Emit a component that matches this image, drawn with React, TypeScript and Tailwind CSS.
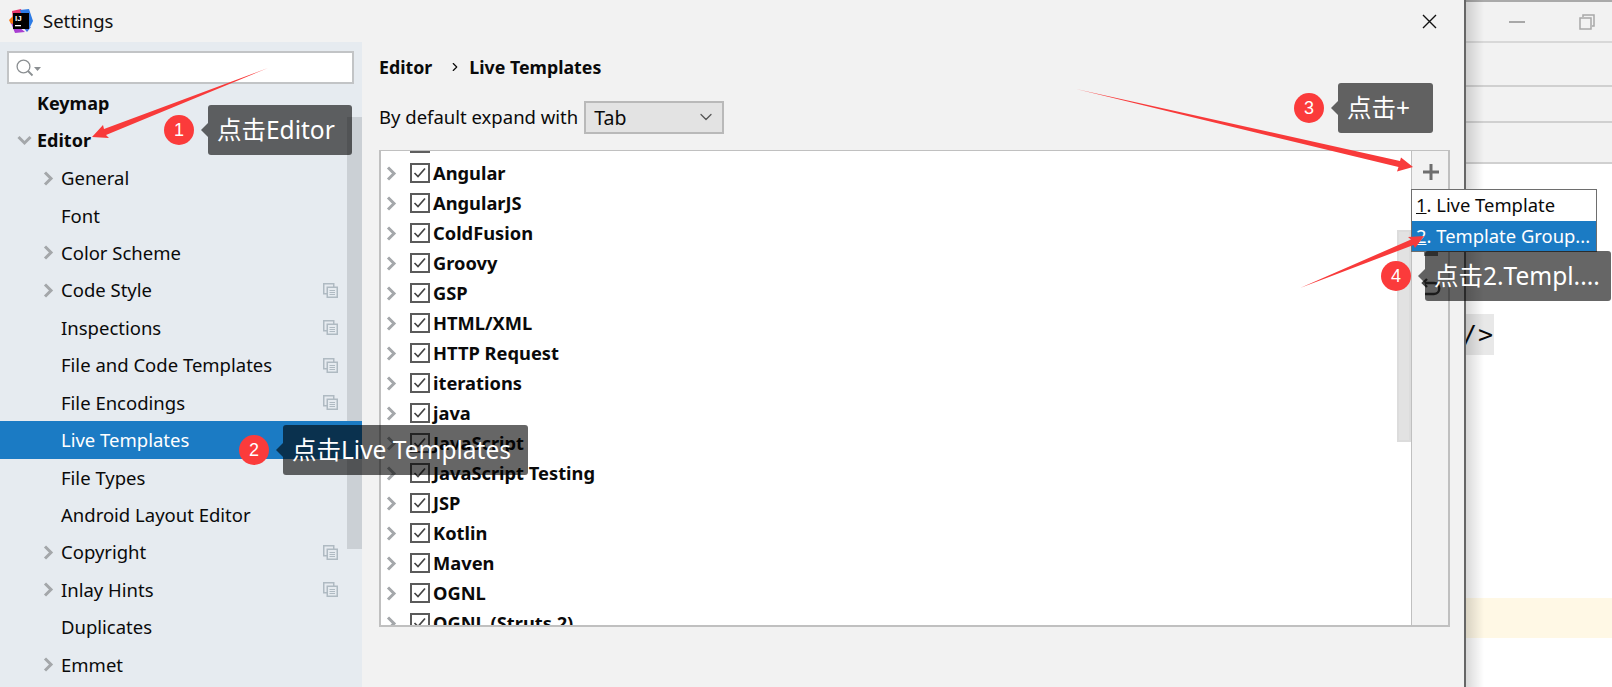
import { ChevronRight, ChevronDown } from 'lucide-react';

const sans = 'font-["Noto_Sans","Noto_Sans_CJK_SC",sans-serif]';

type NavItem = { label: string; depth: 0 | 1; arrow?: 'right' | 'down'; copy?: boolean; active?: boolean };

const navItems: NavItem[] = [
  { label: 'Keymap', depth: 0 },
  { label: 'Editor', depth: 0, arrow: 'down' },
  { label: 'General', depth: 1, arrow: 'right' },
  { label: 'Font', depth: 1 },
  { label: 'Color Scheme', depth: 1, arrow: 'right' },
  { label: 'Code Style', depth: 1, arrow: 'right', copy: true },
  { label: 'Inspections', depth: 1, copy: true },
  { label: 'File and Code Templates', depth: 1, copy: true },
  { label: 'File Encodings', depth: 1, copy: true },
  { label: 'Live Templates', depth: 1, active: true },
  { label: 'File Types', depth: 1 },
  { label: 'Android Layout Editor', depth: 1 },
  { label: 'Copyright', depth: 1, arrow: 'right', copy: true },
  { label: 'Inlay Hints', depth: 1, arrow: 'right', copy: true },
  { label: 'Duplicates', depth: 1 },
  { label: 'Emmet', depth: 1, arrow: 'right' },
];

const groups = [
  'Angular',
  'AngularJS',
  'ColdFusion',
  'Groovy',
  'GSP',
  'HTML/XML',
  'HTTP Request',
  'iterations',
  'java',
  'JavaScript',
  'JavaScript Testing',
  'JSP',
  'Kotlin',
  'Maven',
  'OGNL',
  'OGNL (Struts 2)',
];

function Logo() {
  return (
    <svg width="24" height="24" viewBox="0 0 24 24" className="shrink-0">
      <path d="M3 2 L12 0 L14 6 L4 12 Z" fill="#e8386d" />
      <path d="M11 1 L20 0 L24 12 L20 20 L14 10 Z" fill="#2c7be5" />
      <path d="M0 11 L5 6 L7 15 L2 15 Z" fill="#f97a12" />
      <path d="M2 14 L10 18 L16 23 L6 24 Z" fill="#a83fd1" />
      <path d="M14 18 L22 18 L18 23 Z" fill="#3f6fe0" />
      <rect x="4" y="4" width="16" height="16" fill="#000" />
      <text x="6" y="12" fontSize="8" fontWeight="700" fill="#fff" fontFamily="Liberation Sans">IJ</text>
      <rect x="6" y="16" width="6" height="1.3" fill="#fff" />
    </svg>
  );
}

function CopyIcon({ className }: { className?: string }) {
  return (
    <svg width="15" height="15" viewBox="0 0 15 15" fill="none" stroke="#afbac2" strokeWidth="1.5" className={className}>
      <rect x="0.75" y="0.75" width="10" height="10" />
      <rect x="4.25" y="4.25" width="10" height="10" fill="#e6ebf0" />
      <path d="M6.5 7.5 H12 M6.5 9.5 H12 M6.5 11.5 H12" strokeWidth="1" />
    </svg>
  );
}

function Chevron({ className }: { className?: string }) {
  return (
    <svg width="11" height="15" viewBox="0 0 11 15" fill="none" stroke="#a4a7aa" strokeWidth="3" className={className}>
      <path d="M2 1.5 L8 7.5 L2 13.5" />
    </svg>
  );
}

function Sidebar() {
  return (
    <aside className="relative w-[362px] shrink-0 overflow-hidden bg-[#e6ebf0] pt-[9px]">
      <div className="mx-[7px] flex h-[33px] w-[347px] items-center border-2 border-[#c2c4c6] bg-white pl-[7px]">
        <svg width="25" height="20" viewBox="0 0 25 20" fill="none" stroke="#8b8f92" strokeWidth="1.3">
          <circle cx="7.5" cy="8.5" r="6.4" />
          <path d="M12 13 L16.5 17.5" strokeWidth="1.8" />
          <path d="M18 9 H25 L21.5 13 Z" fill="#8b8f92" stroke="none" />
        </svg>
      </div>
      <div className="absolute right-0 top-[75px] h-[432px] w-[15px] bg-[#cbd0d5]" />
      <ul className="relative mt-[0.5px]">
        {navItems.map((item) => (
          <li
            key={item.label}
            className={`flex h-[37.43px] items-center ${
              item.active ? 'bg-[#1b7bc4] text-white' : 'text-[#0a0a0a]'
            } ${item.depth === 0 ? 'text-[18px] font-bold' : 'text-[18.5px]'}`}
          >
            <span className={`flex shrink-0 justify-end ${item.depth === 0 ? 'w-[37px]' : 'w-[61px]'}`}>
              {item.arrow === 'right' && <Chevron className="mr-[7px]" />}
              {item.arrow === 'down' && (
                <svg width="15" height="11" viewBox="0 0 15 11" fill="none" stroke="#a4a7aa" strokeWidth="3" className="mr-[5px]">
                  <path d="M1.5 2 L7.5 8 L13.5 2" />
                </svg>
              )}
            </span>
            <span className="flex-1 whitespace-nowrap">{item.label}</span>
            {item.copy && <CopyIcon className="mr-[24px]" />}
          </li>
        ))}
      </ul>
    </aside>
  );
}

function Popup() {
  return (
    <div className="absolute left-[1411px] top-[189px] z-10 w-[186px] border border-[#6e6e6e] bg-white text-[18.4px] leading-[30px] text-[#0a0a0a]">
      <div className="h-[31px] pl-[4px] whitespace-nowrap">
        <span className="underline">1</span>. Live Template
      </div>
      <div className="h-[30px] bg-[#1b7bc4] pl-[4px] whitespace-nowrap text-white">
        <span className="underline">2</span>. Template Group...
      </div>
    </div>
  );
}

function Content() {
  return (
    <main className="flex flex-1 flex-col pl-[17px] pr-[14px]">
      <div className="mt-[10px] flex h-[30px] items-center text-[17.8px] font-bold text-[#0a0a0a]">
        <span>Editor</span>
        <ChevronRight size={14} strokeWidth={2} className="ml-[16px] mr-[7px]" />
        <span>Live Templates</span>
      </div>
      <div className="mt-[18px] flex h-[34px] items-center text-[18.5px] text-[#0a0a0a]">
        <span>By default expand with</span>
        <div className="ml-[6px] flex h-[33px] w-[140px] items-center justify-between border-2 border-[#b9b9b9] bg-[#e3e3e3] pl-[8px] pr-[6px]">
          <span className="pt-[2px] text-[19.5px]">Tab</span>
          <ChevronDown size={20} strokeWidth={1.5} className="text-[#555]" />
        </div>
      </div>
      <div className="mt-[16px] flex h-[477px] w-[1071px] border-2 border-t border-[#c0c0c0] bg-white">
        <div className="relative flex-1 overflow-hidden pt-px">
          <ul className="-mt-[24px]">
            <li className="ml-[29px] flex h-[30px] items-center">
              <span className="block h-[20px] w-[20px] border-2 border-[#5f5f5f]" />
            </li>
            {groups.map((name) => (
              <li key={name} className="flex h-[30px] items-center text-[18.3px] font-bold text-[#0a0a0a]">
                <Chevron className="ml-[5px] mr-[3px] shrink-0" />
                <svg width="20" height="20" viewBox="0 0 16 16" fill="none" className="ml-[10px] mr-[3px] shrink-0 border-2 border-[#5a5a5a]">
                  <path d="M2.5 8 L6 11.5 L13 3.5" stroke="#444" strokeWidth="1.7" />
                </svg>
                <span className="whitespace-nowrap">{name}</span>
              </li>
            ))}
          </ul>
          <div className="absolute right-0 top-[79px] h-[212px] w-[14px] border-2 border-[#dcdcdc] bg-[#e2e2e2]" />
        </div>
        <div className="flex w-[37px] shrink-0 flex-col items-center border-l border-[#c0c0c0] bg-[#f2f2f2] pt-[13px] pl-[2px]">
          <svg width="16" height="16" viewBox="0 0 16 16" stroke="#6e6e6e" strokeWidth="3">
            <path d="M8 0 V16 M0 8 H16" />
          </svg>
          <div className="mt-[72px] h-[4px] w-[14px] bg-[#777]" />
          <svg width="20" height="20" viewBox="0 0 20 20" fill="none" stroke="#444" strokeWidth="2.4" className="mt-[22px]">
            <path d="M2 5 H13 C20 5 20 16 13 16 H4" />
            <path d="M6 1 L2 5 L6 9" />
          </svg>
        </div>
      </div>
    </main>
  );
}

function BehindWindow() {
  return (
    <div className="relative flex-1 overflow-hidden border-l-2 border-[#666] bg-white">
      <div className="flex h-[43px] items-center border-y-2 border-t-[#aaa] border-b-[#d8d8d8] bg-[#f2f2f2] pl-[43px]">
        <div className="h-[2px] w-[16px] bg-[#a8a8a8]" />
        <svg width="16" height="16" viewBox="0 0 16 16" fill="none" stroke="#a8a8a8" strokeWidth="1.5" className="ml-[54px]">
          <path d="M4 3 V1 H15 V12 H13" />
          <rect x="1" y="4" width="11" height="11" />
        </svg>
      </div>
      <div className="h-[44px] border-b-2 border-[#d0d0d0] bg-[#f2f2f2]" />
      <div className="h-[36px] border-b-2 border-[#d0d0d0] bg-[#f2f2f2]" />
      <div className="h-[41px] border-b-2 border-[#d0d0d0] bg-[#f2f2f2]" />
      <div className="mt-[150px] flex h-[41px] w-[28px] items-center justify-end bg-[#e8e8e8] font-['DejaVu_Sans_Mono',monospace] text-[25px] tracking-[1px] text-[#0a0a0a]">
        /&gt;
      </div>
      <div className="mt-[243px] h-[40px] bg-[#fff8e5]" />
      <div className="absolute inset-y-0 left-0 w-[18px] bg-gradient-to-r from-black/15 to-transparent" />
    </div>
  );
}

type TipProps = { num: number; text: string; tipClass: string };

// numbered callout: red dot + dark speech bubble sitting over the screenshot
function Tip({ num, text, tipClass }: TipProps) {
  return (
    <div className={`absolute z-30 flex h-[50px] items-center ${tipClass}`}>
      <span className="flex h-[30px] w-[30px] shrink-0 items-center justify-center rounded-full bg-[#fb3b3b] font-['Liberation_Sans'] text-[18px] text-white">
        {num}
      </span>
      <span className="ml-[7px] h-0 w-0 border-y-[7px] border-r-[7px] border-y-transparent border-r-black/60" />
      <span className="flex h-[50px] flex-1 items-center rounded-[3px] bg-black/60 pl-[9px] whitespace-nowrap text-[24.5px] text-white">
        {text}
      </span>
    </div>
  );
}

function Arrows() {
  return (
    <svg width="1612" height="687" viewBox="0 0 1612 687" className="pointer-events-none absolute left-0 top-0 z-40" fill="#f83a3a">
      <polygon points="268,68 104,129 103,125 92,137 109,138 106,135" />
      <polygon points="1076,89 1400,161 1401,157.5 1413,167 1397,171.5 1398.5,167" />
      <polygon points="1300,288 1411,239.5 1408,237 1424,236 1415,248 1413.5,245" />
    </svg>
  );
}

export default function App() {
  return (
    <div className={`relative flex h-[687px] w-[1612px] overflow-hidden bg-white ${sans}`}>
      <div className="flex h-full w-[1464px] shrink-0 flex-col bg-[#f2f2f2]">
        <header className="flex h-[42px] shrink-0 items-center pl-[9px] pr-[17px]">
          <Logo />
          <span className="ml-[10px] flex-1 text-[18.5px] text-[#111]">Settings</span>
          <svg width="15" height="15" viewBox="0 0 15 15" stroke="#111" strokeWidth="1.4" className="mr-[10px]">
            <path d="M1 1 L14 14 M14 1 L1 14" />
          </svg>
        </header>
        <div className="flex flex-1 overflow-hidden">
          <Sidebar />
          <Content />
        </div>
      </div>
      <BehindWindow />
      <Popup />
      <Tip num={1} text="点击Editor" tipClass="left-[164px] top-[105px] w-[188px]" />
      <Tip num={2} text="点击Live Templates" tipClass="left-[239px] top-[425px] w-[289px]" />
      <Tip num={3} text="点击+" tipClass="left-[1294px] top-[83px] w-[139px]" />
      <Tip num={4} text="点击2.Templ...." tipClass="left-[1381px] top-[251px] w-[230px]" />
      <Arrows />
    </div>
  );
}
